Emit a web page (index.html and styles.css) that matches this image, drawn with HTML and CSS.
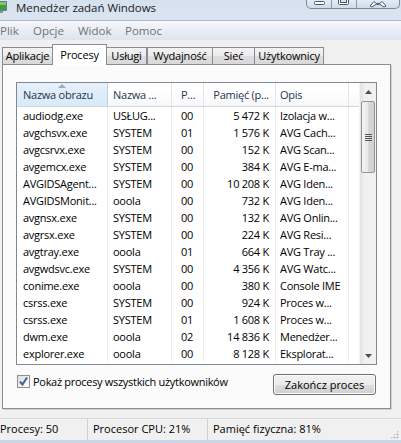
FILE: index.html
```html
<!DOCTYPE html>
<html lang="pl">
<head>
<meta charset="utf-8">
<title>Menedżer zadań Windows</title>
<link rel="stylesheet" href="styles.css">
</head>
<body>
<div class="window">
  <div class="titlebar">
    <svg class="app-icon" width="8" height="14" viewBox="0 0 8 14">
      <rect x="-6" y="1" width="13" height="10" rx="1" fill="#6c7a88"/>
      <rect x="-5" y="2" width="11" height="8" fill="#3f9e3a"/>
      <rect x="-5" y="2" width="11" height="3" fill="#7cc86a"/>
      <rect x="-3" y="11" width="6" height="2" fill="#8a96a3"/>
    </svg>
    <span class="title">Menedżer zadań Windows</span>
    <div class="caption">
      <div class="cbtn cbtn-min">
        <svg width="24" height="8" viewBox="0 0 24 8"><rect x="7.5" y="1.5" width="10" height="3" rx="1" fill="#fff" stroke="#4a5566"/></svg>
      </div>
      <div class="cbtn cbtn-max">
        <svg width="24" height="8" viewBox="0 0 24 8"><rect x="6.5" y="-4.5" width="10" height="9" rx="1" fill="#fff" stroke="#4a5566"/><rect x="8.5" y="-2.5" width="6" height="5" fill="#d9e2ee" stroke="#4a5566"/></svg>
      </div>
      <div class="cbtn cbtn-close">
        <svg width="43" height="8" viewBox="0 0 43 8"><path d="M13 6 L17 1.5 L21 5 L25 1.5 L29 6 L27 7 L21 3 L15 7 Z" fill="#fff" stroke="#4a5566" stroke-linejoin="round"/></svg>
      </div>
    </div>
  </div>

  <div class="menubar">
    <span class="menu-item">Plik</span>
    <span class="menu-item">Opcje</span>
    <span class="menu-item">Widok</span>
    <span class="menu-item">Pomoc</span>
  </div>

  <div class="client">
    <div class="tabs">
      <div class="tab tab-apps">Aplikacje</div>
      <div class="tab tab-proc selected">Procesy</div>
      <div class="tab tab-svc">Usługi</div>
      <div class="tab tab-perf">Wydajność</div>
      <div class="tab tab-net">Sieć</div>
      <div class="tab tab-users">Użytkownicy</div>
    </div>

    <div class="panel">
      <div class="listview">
        <div class="lv-main">
          <div class="lv-header lv-grid">
            <span class="hcell c1 sorted"><span class="sort-arrow"></span>Nazwa obrazu</span>
            <span class="hcell c2">Nazwa ...</span>
            <span class="hcell c3">P...</span>
            <span class="hcell c4">Pamięć (p...</span>
            <span class="hcell c5">Opis</span>
            <span class="hcell c6"></span>
          </div>
          <div class="lv-body">
            <div class="row lv-grid"><span class="c1">audiodg.exe</span><span class="c2">USŁUG...</span><span class="c3">00</span><span class="c4">5&nbsp;472&nbsp;K</span><span class="c5">Izolacja w...</span><span class="c6"></span></div>
            <div class="row lv-grid"><span class="c1">avgchsvx.exe</span><span class="c2">SYSTEM</span><span class="c3">01</span><span class="c4">1&nbsp;576&nbsp;K</span><span class="c5">AVG Cach...</span><span class="c6"></span></div>
            <div class="row lv-grid"><span class="c1">avgcsrvx.exe</span><span class="c2">SYSTEM</span><span class="c3">00</span><span class="c4">152&nbsp;K</span><span class="c5">AVG Scan...</span><span class="c6"></span></div>
            <div class="row lv-grid"><span class="c1">avgemcx.exe</span><span class="c2">SYSTEM</span><span class="c3">00</span><span class="c4">384&nbsp;K</span><span class="c5">AVG E-ma...</span><span class="c6"></span></div>
            <div class="row lv-grid"><span class="c1">AVGIDSAgent...</span><span class="c2">SYSTEM</span><span class="c3">00</span><span class="c4">10&nbsp;208&nbsp;K</span><span class="c5">AVG Iden...</span><span class="c6"></span></div>
            <div class="row lv-grid"><span class="c1">AVGIDSMonit...</span><span class="c2">ooola</span><span class="c3">00</span><span class="c4">732&nbsp;K</span><span class="c5">AVG Iden...</span><span class="c6"></span></div>
            <div class="row lv-grid"><span class="c1">avgnsx.exe</span><span class="c2">SYSTEM</span><span class="c3">00</span><span class="c4">132&nbsp;K</span><span class="c5">AVG Onlin...</span><span class="c6"></span></div>
            <div class="row lv-grid"><span class="c1">avgrsx.exe</span><span class="c2">SYSTEM</span><span class="c3">00</span><span class="c4">224&nbsp;K</span><span class="c5">AVG Resi...</span><span class="c6"></span></div>
            <div class="row lv-grid"><span class="c1">avgtray.exe</span><span class="c2">ooola</span><span class="c3">01</span><span class="c4">664&nbsp;K</span><span class="c5">AVG Tray ...</span><span class="c6"></span></div>
            <div class="row lv-grid"><span class="c1">avgwdsvc.exe</span><span class="c2">SYSTEM</span><span class="c3">00</span><span class="c4">4&nbsp;356&nbsp;K</span><span class="c5">AVG Watc...</span><span class="c6"></span></div>
            <div class="row lv-grid"><span class="c1">conime.exe</span><span class="c2">ooola</span><span class="c3">00</span><span class="c4">380&nbsp;K</span><span class="c5">Console IME</span><span class="c6"></span></div>
            <div class="row lv-grid"><span class="c1">csrss.exe</span><span class="c2">SYSTEM</span><span class="c3">00</span><span class="c4">924&nbsp;K</span><span class="c5">Proces w...</span><span class="c6"></span></div>
            <div class="row lv-grid"><span class="c1">csrss.exe</span><span class="c2">SYSTEM</span><span class="c3">01</span><span class="c4">1&nbsp;608&nbsp;K</span><span class="c5">Proces w...</span><span class="c6"></span></div>
            <div class="row lv-grid"><span class="c1">dwm.exe</span><span class="c2">ooola</span><span class="c3">02</span><span class="c4">14&nbsp;836&nbsp;K</span><span class="c5">Menedżer...</span><span class="c6"></span></div>
            <div class="row lv-grid"><span class="c1">explorer.exe</span><span class="c2">ooola</span><span class="c3">00</span><span class="c4">8&nbsp;128&nbsp;K</span><span class="c5">Eksplorat...</span><span class="c6"></span></div>
          </div>
        </div>
        <div class="vscroll">
          <div class="sb-btn"><svg width="7" height="4" viewBox="0 0 7 4"><path d="M0 4 L3.5 0 L7 4 Z" fill="#4d4d4d"/></svg></div>
          <div class="sb-track">
            <div class="sb-thumb">
              <span class="grip"></span><span class="grip"></span><span class="grip"></span><span class="grip"></span>
            </div>
          </div>
          <div class="sb-btn"><svg width="7" height="4" viewBox="0 0 7 4"><path d="M0 0 L7 0 L3.5 4 Z" fill="#4d4d4d"/></svg></div>
        </div>
      </div>

      <div class="panel-footer">
        <label class="check">
          <span class="check-box"><svg width="11" height="11" viewBox="0 0 11 11"><path d="M2 5.5 L4.5 8.5 L9 1.5" fill="none" stroke="#4a5f9a" stroke-width="2"/></svg></span>
          <span class="check-label">Pokaż procesy wszystkich użytkowników</span>
        </label>
        <button class="btn" type="button">Zakończ proces</button>
      </div>
    </div>
  </div>

  <div class="statusbar">
    <span class="sb-cell sb-first">Procesy: 50</span>
    <span class="sb-cell sb-cpu">Procesor CPU: 21%</span>
    <span class="sb-cell sb-mem">Pamięć fizyczna: 81%</span>
    <span class="sizegrip"></span>
  </div>
  <div class="frame-bottom"></div>
</div>
</body>
</html>
```

FILE: styles.css
```css
* { box-sizing: border-box; }

html, body {
  margin: 0;
  padding: 0;
}

body {
  width: 401px;
  height: 443px;
  overflow: hidden;
  background: #f0f0f0;
  font-family: "Open Sans", "Noto Sans", sans-serif;
  font-size: 11px;
  color: #000;
}

.window {
  display: flex;
  flex-direction: column;
  height: 443px;
}

/* ---------- title bar ---------- */
.titlebar {
  height: 20px;
  flex: none;
  display: flex;
  align-items: flex-start;
  background: linear-gradient(#d5e1ee, #dbe5f1);
}

.app-icon {
  flex: none;
}

.title {
  margin-left: 8px;
  margin-top: 1px;
  font-size: 11.5px;
  line-height: 13px;
  letter-spacing: -0.05px;
  color: #1a1a1a;
}

.caption {
  margin-left: auto;
  margin-right: 1px;
  display: flex;
  height: 9px;
  width: 94px;
  border: 1px solid #7c899b;
  border-top: none;
  border-radius: 0 0 5px 5px;
  background: linear-gradient(#e4ebf3, #cfdbea);
  overflow: hidden;
}

.cbtn {
  display: flex;
  align-items: flex-start;
  justify-content: center;
  height: 8px;
}

.cbtn-min { width: 25px; border-right: 1px solid #8a97a8; }
.cbtn-max { width: 25px; border-right: 1px solid #8a97a8; }
.cbtn-close { flex: 1; }

/* ---------- menu bar ---------- */
.menubar {
  height: 20px;
  flex: none;
  display: flex;
  align-items: center;
  border-top: 1px solid #a9b7c9;
  background: linear-gradient(#f5f7fb, #e4eaf3 70%, #dde4f0);
  font-size: 11.5px;
  color: #727272;
  padding-bottom: 1px;
}

.menu-item { padding: 0 8px 0 0; }
.menu-item:nth-child(1) { width: 33px; }
.menu-item:nth-child(2) { width: 45px; }
.menu-item:nth-child(3) { width: 47px; }

/* ---------- client ---------- */
.client {
  flex: none;
  padding: 4px 0 0 2px;
  height: 378px;
}

.tabs {
  display: flex;
  align-items: flex-end;
  height: 20px;
  position: relative;
  z-index: 1;
}

.tab {
  height: 17px;
  border: 1px solid #898c95;
  border-bottom: none;
  background: linear-gradient(#f3f3f3, #ebebeb 50%, #dedede 51%, #d9d9d9);
  text-align: center;
  line-height: 16px;
  font-size: 11px;
  letter-spacing: -0.2px;
  white-space: nowrap;
  margin-left: -1px;
}

.tab-apps { width: 51px; margin-left: 0; }
.tab-proc { width: 55px; }
.tab-svc { width: 41px; }
.tab-perf { width: 66px; margin-left: 0; }
.tab-net { width: 43px; }
.tab-users { width: 70px; }

.tab.selected {
  height: 21px;
  margin-bottom: -1px;
  background: #fff;
  line-height: 19px;
}

.panel {
  width: 389px;
  height: 345px;
  border: 1px solid #898c95;
  box-shadow: 1px 1px 0 #d3d3d3;
  background: #fbfbfb;
  padding: 17px 13px 0 13px;
  display: flex;
  flex-direction: column;
}

/* ---------- list view ---------- */
.listview {
  height: 283px;
  border: 1px solid #828790;
  background: #fff;
  display: flex;
}

.lv-main {
  width: 342px;
  display: flex;
  flex-direction: column;
  letter-spacing: -0.25px;
}

.lv-grid {
  display: grid;
  grid-template-columns: 91px 64px 32px 72px 73px 10px;
}

.lv-header {
  height: 24px;
  border-bottom: 1px solid #d5d5d5;
  background: linear-gradient(#ffffff, #ffffff 40%, #f6f7f9);
  color: #24364d;
}

.hcell {
  line-height: 23px;
  white-space: nowrap;
  overflow: hidden;
  border-right: 1px solid #e2e6ec;
}

.hcell.c6 { border-right: none; }

.hcell.sorted {
  position: relative;
  background: linear-gradient(#e5f1fb, #d8e9f8);
  border-right-color: #b9d3ea;
}

.sort-arrow {
  position: absolute;
  left: 41px;
  top: 1px;
  width: 0;
  height: 0;
  border-left: 4px solid transparent;
  border-right: 4px solid transparent;
  border-bottom: 4px solid #9aacc2;
}

.c1 { padding-left: 6px; }
.c2 { padding-left: 5px; }
.c3 { padding-left: 9px; }
.c4 { padding-right: 6px; text-align: right; }
.c5 { padding-left: 4px; }

.lv-body { flex: 1; }

.row {
  height: 17px;
  line-height: 17px;
}

.row > span {
  white-space: nowrap;
  overflow: hidden;
  border-right: 1px solid #ededed;
}

.row > .c6 { border-right: none; }

/* ---------- scrollbar ---------- */
.vscroll {
  width: 17px;
  display: flex;
  flex-direction: column;
  background: linear-gradient(90deg, #e3e3e3, #f0f0f0 30%, #f0f0f0);
  border-left: 1px solid #f5f5f5;
}

.sb-btn {
  height: 17px;
  display: flex;
  align-items: center;
  justify-content: center;
}

.sb-track {
  flex: 1;
  padding: 1px 1px 0 1px;
}

.sb-thumb {
  height: 72px;
  border: 1px solid #959595;
  border-radius: 2px;
  background: linear-gradient(90deg, #f3f3f3, #e9e9e9 45%, #d8d8d8 55%, #cfcfcf);
  display: flex;
  flex-direction: column;
  align-items: center;
  justify-content: center;
  gap: 1px;
}

.grip {
  width: 7px;
  height: 1px;
  background: #555;
}

/* ---------- footer ---------- */
.panel-footer {
  display: flex;
  justify-content: space-between;
  align-items: flex-start;
  margin-top: 9px;
  padding-right: 1px;
}

.check {
  display: flex;
  align-items: center;
  margin-top: 1px;
  margin-left: 1px;
}

.check-box {
  width: 13px;
  height: 13px;
  border: 1px solid #8e8f8f;
  background: linear-gradient(135deg, #dcdcdc, #f6f6f6 70%, #fff);
  display: flex;
  align-items: center;
  justify-content: center;
}

.check-label {
  margin-left: 3px;
  line-height: 13px;
  letter-spacing: -0.3px;
}

.btn {
  width: 103px;
  height: 21px;
  padding: 0;
  border: 1px solid #707070;
  border-radius: 3px;
  background: linear-gradient(#f2f2f2, #ebebeb 50%, #dddddd 51%, #cfcfcf);
  font-family: inherit;
  font-size: 11px;
  color: #000;
  box-shadow: inset 0 0 0 1px #fcfcfc;
}

/* ---------- status bar ---------- */
.statusbar {
  height: 22px;
  flex: none;
  display: flex;
  align-items: stretch;
  border-top: 1px solid #d7d7d7;
  background: #f0f0f0;
  line-height: 19px;
  position: relative;
}

.sb-cell {
  white-space: nowrap;
}

.sb-first {
  width: 87px;
  padding-left: 0;
}

.sb-cpu {
  width: 120px;
  border-left: 1px solid #d0d0d0;
  padding-left: 5px;
}

.sb-mem {
  border-left: 1px solid #d0d0d0;
  padding-left: 5px;
}

.sizegrip {
  position: absolute;
  right: 2px;
  bottom: 1px;
  width: 9px;
  height: 9px;
  background:
    radial-gradient(circle, #a9a9a9 0.8px, transparent 1.1px) 0 0 / 3px 3px;
  clip-path: polygon(100% 0, 100% 100%, 0 100%);
}

.frame-bottom {
  flex: 1;
  background: #c7d6e8;
}
```
